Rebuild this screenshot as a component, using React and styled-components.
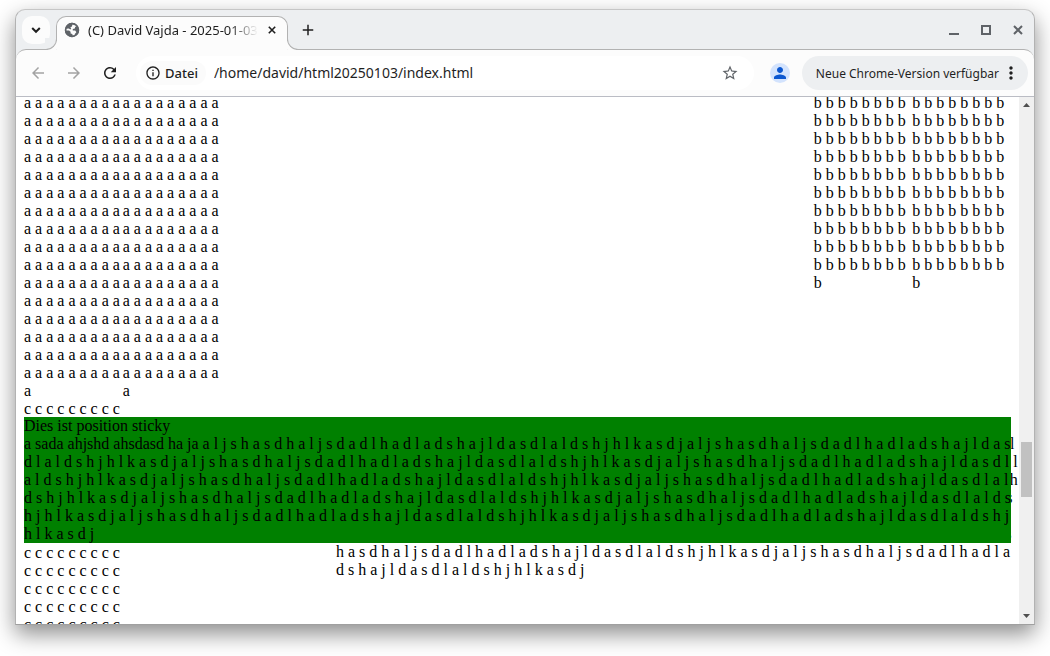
import React from 'react';
import styled, { createGlobalStyle } from 'styled-components';
import {
    MdAdd,
    MdArrowBack,
    MdArrowForward,
    MdInfoOutline,
    MdMoreVert,
    MdPerson,
    MdRefresh,
    MdStarBorder,
} from 'react-icons/md';

const GlobalStyle = createGlobalStyle`
* {
    box-sizing: border-box;
}
body {
    margin: 0;
    background: #fff;
    font-family: "Noto Sans", "Open Sans", sans-serif;
    color: #1f1f1f;
}
button {
    margin: 0;
    padding: 0;
    border: 0;
    background: none;
    font: inherit;
    color: inherit;
}
svg {
    display: block;
}
`;

const Desktop = styled.div`
display: flex;
height: 100vh;
padding: 9px 15px 31px;
overflow: hidden;
`;

const Window = styled.div`
flex: 1;
min-width: 0;
display: flex;
flex-direction: column;
border: 1px solid #b2b2b2;
border-top-color: #c6c6c6;
border-bottom-color: #a0a0a0;
border-radius: 10px 10px 0 0;
background: #edeff1;
box-shadow: 0 9px 22px rgba(0, 0, 0, 0.45);
`;

const TabStrip = styled.header`
display: flex;
align-items: flex-start;
height: 39px;
padding: 6px 8px 0 6px;
`;

const IconButton = styled.button`
flex: none;
display: flex;
align-items: center;
justify-content: center;
width: ${({ $size }) => $size || 28}px;
height: ${({ $size }) => $size || 28}px;
border-radius: 10px;
background: ${({ $bg }) => $bg || 'transparent'};
color: ${({ $color }) => $color || '#1f1f1f'};
`;

const Tab = styled.div`
position: relative;
z-index: 1;
display: flex;
align-items: center;
width: 232px;
height: 34px;
margin: 0 6px;
padding: 0 5px 7px 7px;
border: 1px solid #b2b2b2;
border-bottom: 0;
border-radius: 10px 10px 0 0;
background: #fcfcfc;

&::before,
&::after {
    content: "";
    position: absolute;
    bottom: 0;
    width: 11px;
    height: 11px;
    border: 0 solid #b2b2b2;
    border-bottom-width: 1px;
    background: #edeff1;
}
&::before {
    right: 100%;
    border-right-width: 1px;
    border-bottom-right-radius: 11px;
    box-shadow: 3px 3px 0 #fcfcfc;
    clip-path: inset(0 -1px 0 0);
}
&::after {
    left: 100%;
    border-left-width: 1px;
    border-bottom-left-radius: 11px;
    box-shadow: -3px 3px 0 #fcfcfc;
    clip-path: inset(0 0 0 -1px);
}
`;

const TabTitle = styled.span`
flex: 1;
min-width: 0;
margin: 0 4px 0 8px;
overflow: hidden;
white-space: nowrap;
font-size: 13px;
line-height: 20px;
mask-image: linear-gradient(to right, #000 calc(100% - 28px), transparent);
`;

const WindowControls = styled.div`
display: flex;
gap: 4px;
margin-left: auto;
margin-right: -6px;
`;

const Toolbar = styled.div`
display: flex;
align-items: center;
height: 48px;
padding: 0 6px 0 8px;
border-top: 1px solid #b2b2b2;
border-bottom: 1px solid #babcc4;
border-radius: 10px 10px 0 0;
background: #fcfcfc;
`;

const NavButtons = styled.nav`
display: flex;
gap: 8px;
margin-right: 12px;
`;

const Omnibox = styled.div`
flex: 1;
min-width: 0;
display: flex;
align-items: center;
height: 34px;
padding: 0 10px 0 4px;
border-radius: 17px;
background: #fff;
`;

const FileChip = styled.button`
display: flex;
align-items: center;
gap: 4px;
height: 24px;
padding: 0 8px 0 5px;
border-radius: 12px;
background: #fbfbfb;
font-size: 13px;
font-weight: 500;
`;

const UrlInput = styled.input`
flex: 1;
min-width: 0;
padding: 0 8px;
border: 0;
outline: 0;
background: none;
font: 14px/20px "Noto Sans", "Open Sans", sans-serif;
color: #1f1f1f;
`;

const Avatar = styled.button`
display: flex;
align-items: center;
justify-content: center;
width: 20px;
height: 20px;
margin: 0 12px 0 16px;
border-radius: 50%;
background: #d3e3fd;
color: #0b57d0;
`;

const UpdateButton = styled.button`
display: flex;
align-items: center;
gap: 2px;
height: 34px;
padding: 0 7px 0 14px;
border-radius: 17px;
background: #edeff1;
font-size: 12px;
white-space: nowrap;
`;

const Viewport = styled.div`
flex: 1;
min-height: 0;
display: flex;
background: #fff;
`;

/* the page is scrolled, so the first line is cut by the top edge */
const Page = styled.main`
flex: 1;
min-width: 0;
overflow: hidden;
padding: 0 8px;
background: #fff;
font-family: "Liberation Serif", "Times New Roman", serif;
font-size: 16px;
line-height: 18px;
color: #000;
`;

const ColumnsRow = styled.div`
display: flex;
align-items: flex-start;
margin-top: -3px;
`;

const NarrowText = styled.div`
flex: none;
width: 10%;
`;

const Gap = styled.div`
flex: 1;
`;

const Section = styled.section`
position: relative;
display: flex;
align-items: flex-start;
`;

const Sticky = styled.div`
position: absolute;
z-index: 1;
top: 17px;
left: 0;
right: 0;
background: green;
`;

const WideText = styled.div`
position: absolute;
top: 17px;
left: 312px;
right: -8px;
`;

const Scrollbar = styled.div`
flex: none;
display: flex;
flex-direction: column;
align-items: center;
width: 15px;
background: #f0f0f0;
`;

const ScrollTrack = styled.div`
flex: 1;
display: flex;
flex-direction: column;
`;

const ScrollSpace = styled.div`
flex: ${({ $grow }) => $grow};
`;

const ScrollThumb = styled.div`
width: 11px;
height: 55px;
background: #c1c1c1;
`;

const repeat = (text, count) => Array(count).fill(text).join(' ');

const phrase = 'a l j s h a s d h a l j s d a d l h a d l a d s h a j l d a s d l a l d s h j h l k a s d j';
const longText = 'a sada ahjshd ahsdasd ha ja ' + repeat(phrase, 10);

const ChevronIcon = () => (
    <svg width="10" height="10" viewBox="0 0 10 10" fill="none" stroke="currentColor" strokeWidth="2">
        <path d="M1.2 3L5 6.8L8.8 3" />
    </svg>
)

const CrossIcon = ({ size }) => (
    <svg width={size} height={size} viewBox="0 0 10 10" fill="none" stroke="currentColor" strokeWidth="2">
        <path d="M1 1L9 9M9 1L1 9" />
    </svg>
)

const MinimizeIcon = () => (
    <svg width="10" height="10" viewBox="0 0 10 10" fill="currentColor">
        <path d="M0 8h10v2H0z" />
    </svg>
)

const MaximizeIcon = () => (
    <svg width="10" height="10" viewBox="0 0 10 10" fill="none" stroke="currentColor" strokeWidth="2">
        <path d="M1 1h8v8H1z" />
    </svg>
)

const GlobeIcon = () => (
    <svg width="16" height="16" viewBox="0 0 16 16">
        <circle cx="8" cy="8" r="7.2" fill="#5f6368" />
        <path
            d="M8.4 2.2H11l1.6 2.4-1.4.2-.4 1.8-2 .4v1.4h2.4l1.2 1.8-1.4 1.6-.6 1.6-2 .2V12L6.600 11.400V9.800L5 8.600H2l.2-1.800 2.600-.2 1.600.8.8-.6-.8-1.600L8 4.400z"
            fill="#fcfcfc"
        />
        <circle cx="8" cy="8" r="6.4" fill="none" stroke="#5f6368" strokeWidth="1.6" />
    </svg>
)

const ScrollArrow = ({ down }) => (
    <svg width="15" height="17" viewBox="0 0 15 17" fill="#505050">
        {down ?
            <path d="M4 7h7L7.5 11z" />
            :
            <path d="M4 10h7L7.5 6z" />
        }
    </svg>
)

const App = () => {
    return (
        <>
            <GlobalStyle />
            <Desktop>
                <Window>
                    <TabStrip>
                        <IconButton $bg="#fcfcfc" aria-label="Tabs durchsuchen"><ChevronIcon /></IconButton>
                        <Tab>
                            <GlobeIcon />
                            <TabTitle>(C) David Vajda - 2025-01-03</TabTitle>
                            <IconButton $size={20} aria-label="Tab schließen"><CrossIcon size={8} /></IconButton>
                        </Tab>
                        <IconButton aria-label="Neuer Tab"><MdAdd size={18} /></IconButton>
                        <WindowControls>
                            <IconButton $color="#5f6368" aria-label="Minimieren"><MinimizeIcon /></IconButton>
                            <IconButton $color="#5f6368" aria-label="Maximieren"><MaximizeIcon /></IconButton>
                            <IconButton $color="#5f6368" aria-label="Schließen"><CrossIcon size={10} /></IconButton>
                        </WindowControls>
                    </TabStrip>
                    <Toolbar>
                        <NavButtons>
                            <IconButton $color="#a3a3a3" aria-label="Zurück"><MdArrowBack size={18} /></IconButton>
                            <IconButton $color="#a3a3a3" aria-label="Vorwärts"><MdArrowForward size={18} /></IconButton>
                            <IconButton aria-label="Neu laden"><MdRefresh size={18} /></IconButton>
                        </NavButtons>
                        <Omnibox>
                            <FileChip><MdInfoOutline size={16} />Datei</FileChip>
                            <UrlInput aria-label="Adresse" defaultValue="/home/david/html20250103/index.html" />
                            <IconButton $color="#5f6368" aria-label="Lesezeichen"><MdStarBorder size={18} /></IconButton>
                        </Omnibox>
                        <Avatar aria-label="Profil"><MdPerson size={18} /></Avatar>
                        <UpdateButton>Neue Chrome-Version verfügbar<MdMoreVert size={20} /></UpdateButton>
                    </Toolbar>
                    <Viewport>
                        <Page>
                            <ColumnsRow>
                                <NarrowText>{repeat('a', 145)}</NarrowText>
                                <NarrowText>{repeat('a', 145)}</NarrowText>
                                <Gap />
                                <NarrowText>{repeat('b', 81)}</NarrowText>
                                <NarrowText>{repeat('b', 81)}</NarrowText>
                            </ColumnsRow>
                            <Section>
                                <NarrowText>{repeat('c', 144)}</NarrowText>
                                <WideText>
                                    <br />
                                    {longText}
                                </WideText>
                                <Sticky>
                                    Dies ist position sticky<br />
                                    {longText}
                                </Sticky>
                            </Section>
                        </Page>
                        <Scrollbar>
                            <ScrollArrow />
                            <ScrollTrack>
                                <ScrollSpace $grow={328} />
                                <ScrollThumb />
                                <ScrollSpace $grow={110} />
                            </ScrollTrack>
                            <ScrollArrow down />
                        </Scrollbar>
                    </Viewport>
                </Window>
            </Desktop>
        </>
    )
}

export default App
